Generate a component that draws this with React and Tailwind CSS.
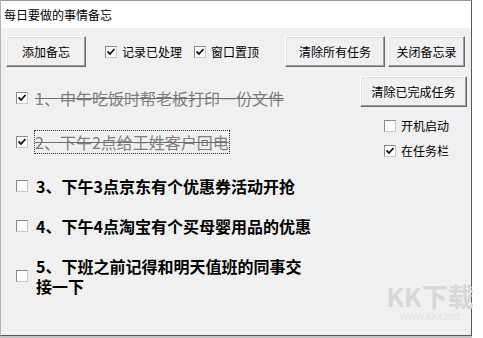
import React from 'react';

// classic win32 look: 3D buttons and sunken checkboxes
const btn =
  "h-[31px] flex items-center justify-center bg-[#f0f0f0] text-[12px] text-black border-t border-l border-t-white border-l-white border-r border-b border-r-[#696969] border-b-[#696969] shadow-[inset_-1px_-1px_#a0a0a0,inset_1px_1px_#e3e3e3]";

function Box({ checked }) {
  return (
    <span className="shrink-0 w-[12px] h-[12px] bg-white border border-t-[#8a8a8a] border-l-[#8a8a8a] border-r-[#c8c8c8] border-b-[#c8c8c8] flex items-center justify-center">
      {checked && (
        <svg width="8" height="8" viewBox="0 0 8 8">
          <path d="M0.5 3.5 L3 6 L7.5 1" stroke="#111" strokeWidth="1.8" fill="none" />
        </svg>
      )}
    </span>
  );
}

function Check({ checked, label, className = '' }) {
  return (
    <div className={"flex items-center gap-[5px] text-[12px] text-black leading-[16px] " + className}>
      <Box checked={checked} />
      <span>{label}</span>
    </div>
  );
}

function Item({ done, focus, children, className = '' }) {
  return (
    <div className={"flex items-center gap-[7px] " + className}>
      <Box checked={done} />
      {done ? (
        <span
          className={
            "text-[16px] leading-[20px] text-[#7f7f7f] line-through decoration-[#6f6f6f] " +
            (focus ? "border border-dotted border-[#333] py-[1px] -ml-[1px]" : "")
          }
        >
          {children}
        </span>
      ) : (
        <span className="text-[16px] leading-[20px] text-black font-bold ml-[1px]">{children}</span>
      )}
    </div>
  );
}

export default function App() {
  return (
    <div className="w-[483px] h-[338px] bg-white overflow-hidden font-['Microsoft_YaHei','Noto_Sans_CJK_SC',sans-serif] relative">
      <div className="w-[472px] h-[336px] flex flex-col border-t border-t-[#9a9a9a] border-l border-l-[#b4b4b4] border-r border-r-[#5a5a5a] border-b border-b-[#5a5a5a]">
        {/* title */}
        <div className="h-[27px] shrink-0 bg-white flex items-center pl-[3px] text-[12px] text-black">
          每日要做的事情备忘
        </div>

        <div className="flex-1 bg-[#f0f0f0] flex flex-col">
          {/* toolbar */}
          <div className="flex items-center pt-[8px]">
            <button className={btn + " ml-[5px] w-[80px]"}>添加备忘</button>
            <Check checked label="记录已处理" className="ml-[19px]" />
            <Check checked label="窗口置顶" className="ml-[12px]" />
            <button className={btn + " ml-[26px] w-[100px]"}>清除所有任务</button>
            <button className={btn + " ml-[3px] w-[77px]"}>关闭备忘录</button>
          </div>

          <div className="flex flex-1">
            {/* memo list */}
            <div className="flex-1 flex flex-col pl-[15px]">
              <Item done className="mt-[21px]">1、中午吃饭时帮老板打印一份文件</Item>
              <Item done focus className="mt-[22px]">2、下午2点给王姓客户回电</Item>
              <Item className="mt-[22px]">3、下午3点京东有个优惠券活动开抢</Item>
              <Item className="mt-[20px]">4、下午4点淘宝有个买母婴用品的优惠</Item>
              <Item className="mt-[20px]">
                <span className="block w-[272px]">5、下班之前记得和明天值班的同事交接一下</span>
              </Item>
            </div>

            {/* side panel */}
            <div className="w-[107px] mr-[4px] flex flex-col">
              <button className={btn + " mt-[9px] w-[107px]"}>清除已完成任务</button>
              <Check label="开机启动" className="ml-[24px] mt-[11px]" />
              <Check checked label="在任务栏" className="ml-[24px] mt-[9px]" />
            </div>
          </div>
        </div>
      </div>
      <div className="h-[2px] w-[472px] bg-[#c4c4c4]" />

      {/* site watermark */}
      <div className="absolute left-[382px] top-[282px] w-[96px] flex flex-col items-center pointer-events-none whitespace-nowrap">
        <span className="text-[26px] leading-[28px] text-[#d8d8d8] font-bold">KK下载</span>
        <span className="text-[10px] leading-[12px] text-[#e2e2e2]">www.kkx.net</span>
      </div>
    </div>
  );
}
